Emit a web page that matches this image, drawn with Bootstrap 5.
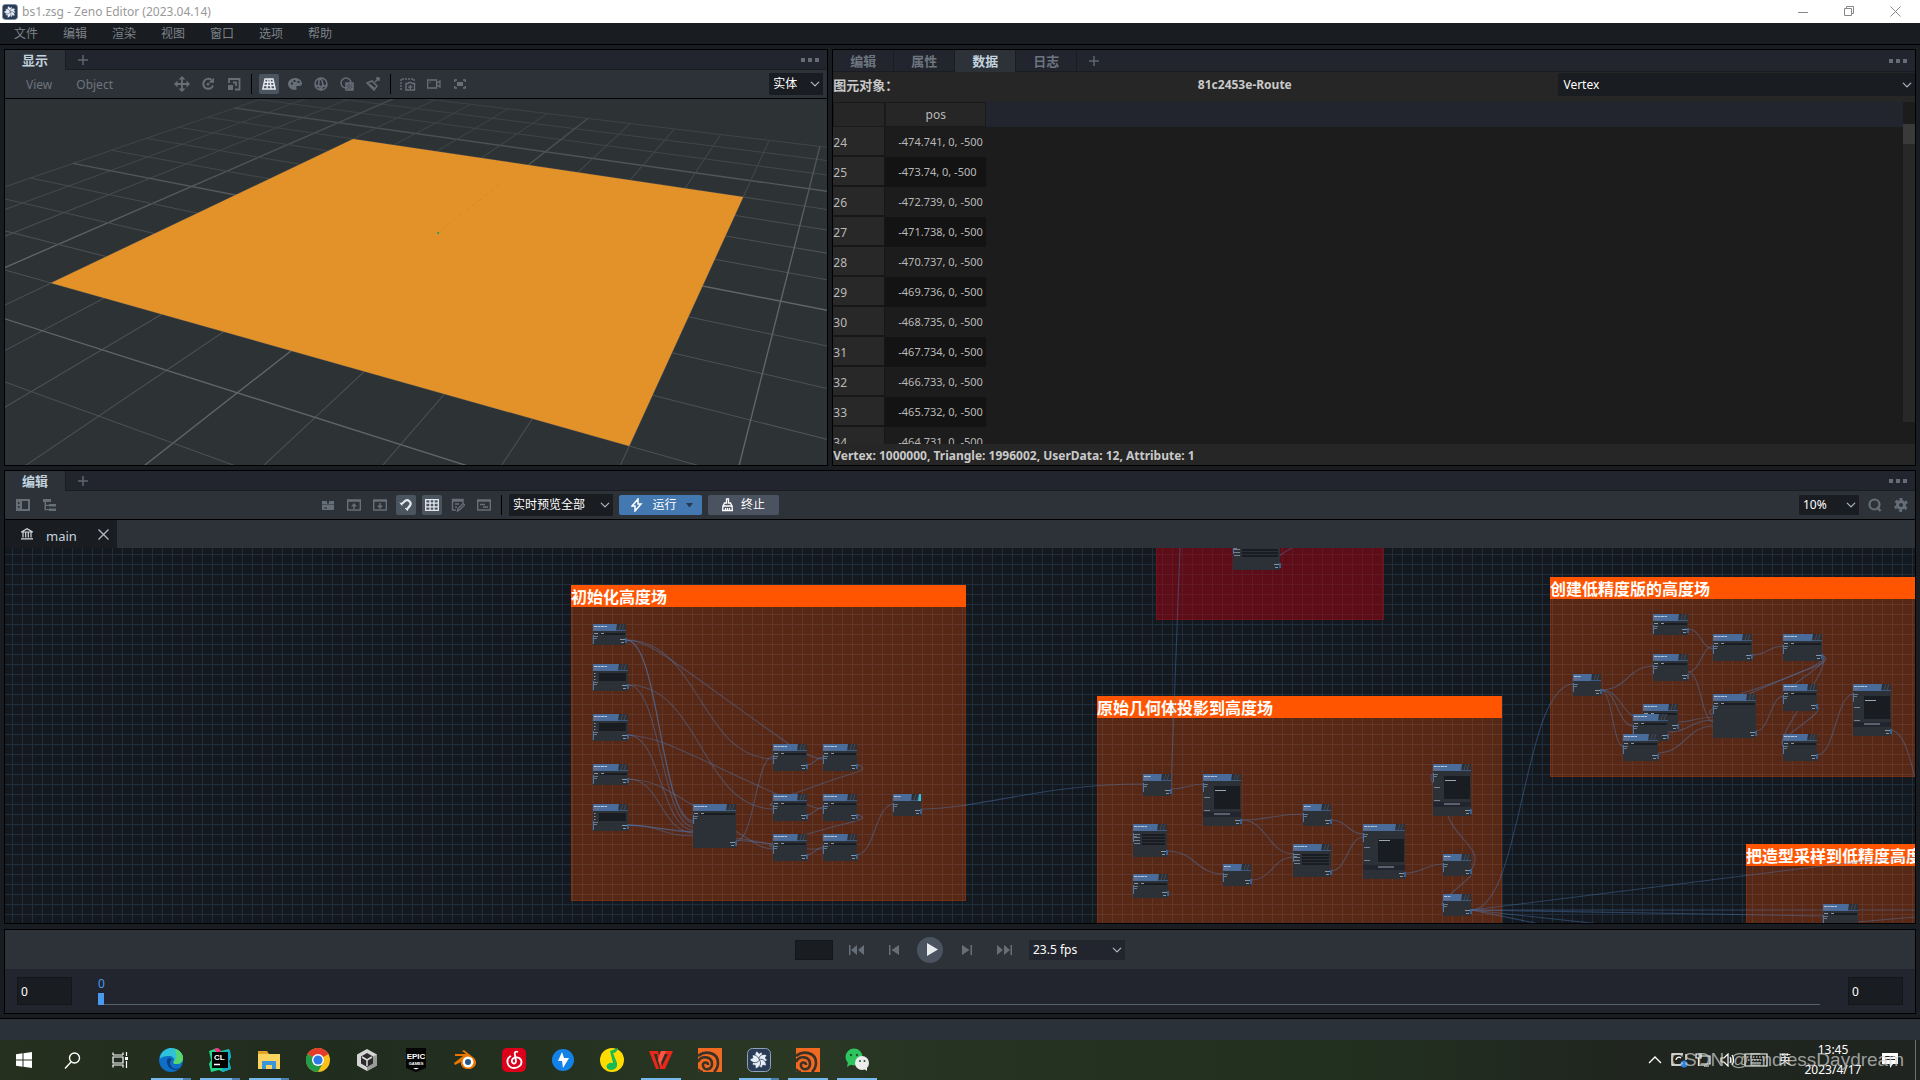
<!DOCTYPE html>
<html lang="zh-CN" data-bs-theme="dark">
<head>
<meta charset="utf-8">
<meta name="viewport" content="width=device-width, initial-scale=1">
<title>bs1.zsg - Zeno Editor (2023.04.14)</title>
<link rel="stylesheet" href="https://cdn.jsdelivr.net/npm/bootstrap@5.3.0/dist/css/bootstrap.min.css">
<style>
:root{--ui:"Noto Sans","Noto Sans CJK SC",sans-serif}
body{font:12px/16px var(--ui);background:#191c20;color:#8a9099;height:100vh;overflow:hidden}
button{font:inherit;color:inherit;background:none;border:0;padding:0}
svg{display:block}
.titlebar{height:23px;background:#fff;color:#999;padding:0 2px}
.win-btn{width:46px;height:23px;color:#888}
.menubar{height:22px;border-bottom:1px solid #000;padding:1px 0 0 2px;gap:1px}
.menubar button{padding:0 12px;color:#7d838b}
.workspace{padding:4px 4px 5px;gap:4px;min-height:0}
.dock{border:1px solid #000;background:#2d3239;min-width:0;min-height:0;overflow:hidden}
.dock-row{gap:4px;flex:417 1 0;min-height:0}
.dock-view{flex:824 1 0}
.dock-data{flex:1084 1 0;background:#262626}
.dock-graph{flex:452 1 0}
.tabs{background:#22252d;border-bottom:1px solid #191c20;height:20px;padding-right:8px;flex:none}
.tabs.tall{height:22px}
.tabs .tab{width:61px;font-size:13px;font-weight:700;color:#6d757f;border-right:1px solid #191c20;height:100%}
.tabs .tab.active{background:#2d3239;color:#c3d2df;height:calc(100% + 1px)}
.plus{width:34px;color:#5f666e}
.dots{color:#666d75}
.tools{background:#2d3239;flex:none;border-bottom:1px solid #000;height:29px}
.tool{width:20px;height:20px;border-radius:2px;color:#666e77;display:flex;align-items:center;justify-content:center}
.tool.active{background:#4b5560;color:#e6eaee}
.tool-set{gap:6px}
.divide{width:1px;height:20px;background:#000;margin:0 7px}
.menu-word{color:#6d747c;padding:2px 0 0 21px}
.menu-word + .menu-word{padding-left:24px}
.group-a{margin-left:59px}
.group-b{margin-left:259px}
.pick{--bs-form-select-bg-img:url("data:image/svg+xml,%3Csvg xmlns='http://www.w3.org/2000/svg' viewBox='0 0 10 10'%3E%3Cpath d='M1.500 3l3.500 4 3.500-4' fill='none' stroke='%23737b84' stroke-width='1.500'/%3E%3C/svg%3E");
 font:12px/16px var(--ui);padding:2px 18px 2px 4px;background-color:#191c20;color:#fff;border:0;border-radius:1px;background-position:right 3px center;background-size:10px 10px;min-height:0}
.shade-w{width:54px;height:22px}
.preview-w{width:104px;height:22px}
.zoom-w{width:60px;height:20px}
.fps-w{width:96px;height:20px;background-color:#22252d;margin-left:2px}
.object-row{height:30px;color:#c9c9c9;font-weight:700;padding-top:1px}
.object-row .pick{height:23px;padding-left:5px}
.object-row label,.object-row .objname{line-height:24px}
.object-row label{font-size:13px}
.sheet-wrap{background:#1c1c1c}
.sheet-scroll{overflow:hidden;min-height:0}
.sheet{width:153px;border-collapse:separate;border-spacing:0;color:#b9b9b9;font-size:11px}
.sheet th,.sheet td{height:30px;padding:0;font-weight:400;vertical-align:middle}
.sheet thead th{height:25px;background:#262626;border:1px solid #1a1a1a;text-align:center;font-size:12px}
.sheet tbody th{width:52px;background:#282828;border-bottom:2px solid #171717;border-right:1px solid #171717;font-size:12px;padding-top:3px}
.sheet td{padding-left:13px}
.sheet tbody tr:nth-child(even) td{background:#131313}
.headfill{background:#22252e;height:25px}
.vbar{width:12px;background:#1c1c1c}
.vbar .gap0{height:22px}
.vbar .thumb{height:20px;background:#3a3a3a}
.vbar .rest{background:#282828;margin-bottom:22px}
.stats{height:21px;color:#c9c9c9;font-weight:700;padding-top:4px}
.graph-tabs{height:28px;background:#2d3239;flex:none}
.graph-tab{width:112px;background:#191c20;color:#c3d2df;padding:0 8px 0 16px}
.graph-tab a{font-size:13px;margin-left:13px;padding-top:3px}
.act{height:20px;border-radius:2px;color:#fff;margin-left:6px}
.act-run{background:#4478b0;width:83px;padding:0 9px 0 12px}
.act-stop{background:#4b5260;width:71px}
.search-set{margin-left:6px}
.stage{min-height:0}
.stage svg{width:100%;height:100%}
.frame-title{font:700 16px "Noto Sans CJK SC",sans-serif;fill:#fff}
.timeline{margin:0 4px 4px;height:85px;flex:none;background:#22252d}
.play-row{height:39px;background:#2d3239}
.framebox{background:#191c20;border:1px solid #141619;color:#fff;font:12px/16px var(--ui);padding:0 3px;border-radius:0}
.framebox.sm{width:38px;height:20px}
.framebox.lg{width:55px;height:28px}
.ruler{margin:0 28px 0 26px;height:28px;border-bottom:1px solid #55626d;color:#4a9bf0}
.ruler .handle{width:6px;height:12px;background:#4a9bf0}
.ruler .num{height:16px;line-height:13px}
.jump{width:46px}
.step{width:29px}
.play-btn{width:26px;height:26px;border-radius:50%;background:#4b5260;color:#e8ebee;margin:0 9px}
.footer-bar{height:22px;border-top:1px solid #000;background:#2b3139;flex:none}
.taskbar{height:40px;flex:none;background:linear-gradient(90deg,#26301f,#202c1e 18%,#2a3824 42%,#263222 50%,#22301f 70%,#20261f 84%,#1f2420);color:#fff}
.sys{width:48px}
.apps{margin-left:2px}
.app{width:49px;height:40px}
.app svg{width:24px;height:24px}
.app.run{background:linear-gradient(#76b9ed,#76b9ed) center bottom/40px 2px no-repeat}
.app.many{background:linear-gradient(90deg,#76b9ed 80%,#4b7fae 80%) center bottom/40px 2px no-repeat}
.tray{width:24px;height:40px;display:flex;align-items:center;justify-content:center}
.tray.wide{width:34px}
.clock{line-height:20px;text-align:center;width:72px}
.desk-edge{width:5px;height:40px;border-left:1px solid #6d716c;margin-left:8px}
.mark-text{right:16px;bottom:7px;font:19px/26px "Liberation Sans",sans-serif;color:rgba(205,208,205,.72);white-space:nowrap;pointer-events:none}
</style>
<script src="https://cdn.jsdelivr.net/npm/bootstrap@5.3.0/dist/js/bootstrap.bundle.min.js"></script>
</head>
<body class="d-flex flex-column">

<svg width="0" height="0" class="position-absolute" aria-hidden="true"><defs>
<symbol id="i-plus" viewBox="0 0 10 10"><path d="M5 0v10M0 5h10" stroke="currentColor" stroke-width="1.500"/></symbol>
<symbol id="i-dots" viewBox="0 0 18 4"><path d="M0 0h4v4H0zM7 0h4v4H7zM14 0h4v4h-4z" fill="currentColor"/></symbol>
<symbol id="i-zeno" viewBox="0 0 24 24"><rect x=".5" y=".5" width="23" height="23" rx="5" fill="#2a3b55" stroke="#8fa1b8"/><g fill="#e6edf6" stroke="#2a3b55" stroke-width=".7"><path id="petal" d="M12 12.500C7 11 7 5 10 3l2 2.500L14.500 4c2 3 0 7-2.500 8.500z"/><use href="#petal" transform="rotate(72 12 12)"/><use href="#petal" transform="rotate(144 12 12)"/><use href="#petal" transform="rotate(216 12 12)"/><use href="#petal" transform="rotate(288 12 12)"/></g></symbol>
<symbol id="i-houdini" viewBox="0 0 24 24"><path fill="#f26a21" d="M0 0h24v24H0z"/><g fill="none" stroke="#3a3226" stroke-width="2.600"><path d="M0 8C7 2 20 4 20 15c0 4-2 7-4 9"/><path d="M0 14c3-7 14-6 14 2 0 6-8 7-9 2-1-4 5-5 5-1"/><path d="M0 21c1 2 3 3 5 3"/></g></symbol>
</defs></svg>

<header class="titlebar d-flex align-items-center">
  <svg width="16" height="16"><use href="#i-zeno"/></svg>
  <span class="ms-1">bs1.zsg - Zeno Editor (2023.04.14)</span>
  <div class="ms-auto d-flex">
    <button class="win-btn d-flex align-items-center justify-content-center" aria-label="Minimize"><svg width="10" height="10"><path d="M0 5.500h10" stroke="currentColor"/></svg></button>
    <button class="win-btn d-flex align-items-center justify-content-center" aria-label="Restore"><svg width="11" height="11" fill="none" stroke="currentColor"><path d="M.5 2.500h7v7h-7zM2.500 2.500v-2h7v7h-2"/></svg></button>
    <button class="win-btn d-flex align-items-center justify-content-center" aria-label="Close"><svg width="11" height="11" stroke="currentColor"><path d="M.5.5l10 10M10.500.5l-10 10"/></svg></button>
  </div>
</header>
<nav class="menubar d-flex align-items-center">
  <button>文件</button><button>编辑</button><button>渲染</button><button>视图</button><button>窗口</button><button>选项</button><button>帮助</button>
</nav>

<main class="workspace d-flex flex-column flex-grow-1">
  <div class="dock-row d-flex">
    <section class="dock dock-view d-flex flex-column">
      <div class="tabs d-flex align-items-center">
        <button class="tab active">显示</button>
        <button class="plus d-flex justify-content-center" aria-label="Add tab"><svg width="10" height="10"><use href="#i-plus"/></svg></button>
        <button class="dots ms-auto" aria-label="More"><svg width="18" height="4"><use href="#i-dots"/></svg></button>
      </div>
      <div class="tools d-flex align-items-center pe-1">
        <button class="menu-word">View</button><button class="menu-word">Object</button>
        <div class="tool-set group-a d-flex">
          <button class="tool" aria-label="Move"><svg width="16" height="16" fill="none" stroke="currentColor" stroke-width="1.800"><path d="M8 2v12M2 8h12"/><path d="M8 0l3.500 3.500h-7zM8 16l3.500-3.500h-7zM0 8l3.500-3.500v7zM16 8l-3.500-3.500v7z" fill="currentColor" stroke="none"/></svg></button>
          <button class="tool" aria-label="Rotate"><svg width="14" height="14" fill="none" stroke="currentColor" stroke-width="2"><path d="M10.500 3A5 5 0 1 0 12 8.500"/><path d="M7.500 5.800H13V.8z" fill="currentColor" stroke="none"/><circle cx="7" cy="7.300" r="1.300" fill="currentColor" stroke="none"/></svg></button>
          <button class="tool" aria-label="Scale"><svg width="14" height="14" fill="none" stroke="currentColor" stroke-width="1.800"><path d="M2 6V2h10.500v10.500H8"/><path d="M1 8h5v5H1z" fill="currentColor" stroke="none"/><path d="M6 5.500h3V9"/></svg></button>
        </div>
        <span class="divide"></span>
        <div class="tool-set d-flex">
          <button class="tool active" aria-label="Grid"><svg width="14" height="12" fill="none" stroke="currentColor" stroke-width="1.400"><path d="M3 1h8l2.200 10H.8zM6 1L5 11M8 1l1 10M2.500 4.200h9M1.500 7.500h11"/></svg></button>
          <button class="tool" aria-label="Palette"><svg width="14" height="14"><path fill="currentColor" fill-rule="evenodd" d="M7 1c4 0 7 2.500 7 5.500C14 9 12 9 10 9s-2 1-1.500 2S8 13 7 13C3 13 0 10 0 7s3-6 7-6zM3 5.500h2v2H3zM5.500 3h2v2h-2zM9.500 4h2v2h-2z"/></svg></button>
          <button class="tool" aria-label="Wireframe"><svg width="14" height="14" fill="none" stroke="currentColor" stroke-width="1.600"><circle cx="7" cy="7" r="6"/><path d="M6 1c-2 4-2 8 1 12M6 1c3 3 4 7 1 12M1 8c4 2 8 2 12 0"/></svg></button>
          <button class="tool" aria-label="Smooth"><svg width="14" height="14" fill="none" stroke="currentColor" stroke-width="1.500"><path d="M6 11a5 5 0 1 1 5-5"/><path d="M6 6h7v7H6zM7 7l6 6M9.500 6.500l3.500 3.500M6.500 9.500L10 13"/></svg></button>
          <button class="tool" aria-label="Light"><svg width="14" height="14" fill="none" stroke="currentColor" stroke-width="1.500"><path d="M1 6l5-2 5 5-3 4zM3 7l5 4M9 5l4-4M10 1h3v3M6 4l2 2"/></svg></button>
        </div>
        <span class="divide"></span>
        <div class="tool-set d-flex">
          <button class="tool" aria-label="Snapshot"><svg width="16" height="13" fill="none" stroke="currentColor" stroke-width="1.400"><path d="M1 12V1h13v2" stroke-dasharray="2 1"/><path d="M6 5.500h2l1-1h2l1 1h2.500v6.500H6zM10.300 7v4M8.300 9h4"/></svg></button>
          <button class="tool" aria-label="Record"><svg width="14" height="10" fill="none" stroke="currentColor" stroke-width="1.300"><path d="M.6 1h9v8h-9zM10 4l3-2v6l-3-2M2.500 3.500h1"/></svg></button>
          <button class="tool" aria-label="Focus"><svg width="12" height="10" fill="none" stroke="currentColor" stroke-width="1.400"><path d="M.7 3V1H3M9 1h2.300v2M11.300 7v2H9M3 9H.7V7"/><path d="M3 3h6v4H3z" fill="currentColor" stroke="none"/></svg></button>
        </div>
        <select class="form-select pick shade-w ms-auto" aria-label="着色"><option>实体</option></select>
      </div>
      <div class="stage flex-grow-1"><svg id="scene" viewBox="5 99 822 366" preserveAspectRatio="xMidYMid slice"></svg></div>
    </section>

    <section class="dock dock-data d-flex flex-column">
      <div class="tabs tall d-flex align-items-center">
        <button class="tab">编辑</button><button class="tab">属性</button><button class="tab active">数据</button><button class="tab">日志</button>
        <button class="plus d-flex justify-content-center" aria-label="Add tab"><svg width="10" height="10"><use href="#i-plus"/></svg></button>
        <button class="dots ms-auto" aria-label="More"><svg width="18" height="4"><use href="#i-dots"/></svg></button>
      </div>
      <div class="object-row row g-0 flex-shrink-0">
        <label class="col-4" for="prim">图元对象：</label>
        <span class="col-4 objname ps-1">81c2453e-Route</span>
        <div class="col-4 ps-1"><select id="prim" class="form-select pick"><option>Vertex</option></select></div>
      </div>
      <div class="sheet-wrap d-flex flex-grow-1 sheet-scroll">
        <div class="sheet-scroll">
          <table class="sheet">
            <thead><tr><th></th><th>pos</th></tr></thead>
            <tbody>
              <tr><th>24</th><td>-474.741, 0, -500</td></tr>
              <tr><th>25</th><td>-473.74, 0, -500</td></tr>
              <tr><th>26</th><td>-472.739, 0, -500</td></tr>
              <tr><th>27</th><td>-471.738, 0, -500</td></tr>
              <tr><th>28</th><td>-470.737, 0, -500</td></tr>
              <tr><th>29</th><td>-469.736, 0, -500</td></tr>
              <tr><th>30</th><td>-468.735, 0, -500</td></tr>
              <tr><th>31</th><td>-467.734, 0, -500</td></tr>
              <tr><th>32</th><td>-466.733, 0, -500</td></tr>
              <tr><th>33</th><td>-465.732, 0, -500</td></tr>
              <tr><th>34</th><td>-464.731, 0, -500</td></tr>
            </tbody>
          </table>
        </div>
        <div class="headfill flex-grow-1"></div>
        <div class="vbar d-flex flex-column"><div class="gap0"></div><div class="thumb"></div><div class="rest flex-grow-1"></div></div>
      </div>
      <div class="stats flex-shrink-0">Vertex: 1000000, Triangle: 1996002, UserData: 12, Attribute: 1</div>
    </section>
  </div>

  <section class="dock dock-graph d-flex flex-column">
    <div class="tabs d-flex align-items-center">
      <button class="tab active">编辑</button>
      <button class="plus d-flex justify-content-center" aria-label="Add tab"><svg width="10" height="10"><use href="#i-plus"/></svg></button>
      <button class="dots ms-auto" aria-label="More"><svg width="18" height="4"><use href="#i-dots"/></svg></button>
    </div>
    <div class="tools d-flex align-items-center ps-2 pe-1">
      <div class="tool-set d-flex">
        <button class="tool" aria-label="Side panel"><svg width="14" height="12"><path fill="currentColor" fill-rule="evenodd" d="M0 0h14v12H0zM6 2v8h6V2zM2 3h1.500v2H2zM2 7h1.500v2H2z"/></svg></button>
        <button class="tool" aria-label="Tree"><svg width="13" height="12" fill="currentColor"><path d="M0 0h8v3H0zM6 5h7v2.500H6zM6 9.500h7V12H6zM1.500 3H3v7h3v1.200H1.500zM3 5.700h3V7H3z"/></svg></button>
      </div>
      <div class="tool-set group-b d-flex">
        <button class="tool" aria-label="Subnet"><svg width="12" height="11" fill="currentColor"><path d="M0 1h5v2.500h2V1h5v3.500H0zM0 5h12v5H0z"/><path d="M2 8h3" stroke="#2d3239"/></svg></button>
        <button class="tool" aria-label="Import"><svg width="14" height="12" fill="none" stroke="currentColor" stroke-width="1.400"><path d="M.7 1h12.600v10H.7zM.7 2h12.600M7 10V7"/><path d="M7 4l3 3.500H4z" fill="currentColor" stroke="none"/></svg></button>
        <button class="tool" aria-label="Export"><svg width="14" height="12" fill="none" stroke="currentColor" stroke-width="1.400"><path d="M.7 1h12.600v10H.7zM.7 2h12.600M7 4v3"/><path d="M7 10L4 6.500h6z" fill="currentColor" stroke="none"/></svg></button>
        <button class="tool active" aria-label="Snap"><svg width="14" height="14" fill="none" stroke="currentColor" stroke-width="2.200"><path d="M2 6.500l4-3.500c3-2.500 7 1.500 5 4.500L7.500 12"/><path d="M1 4.500l2 3M6 10l3 2.500" stroke-width="1"/></svg></button>
        <button class="tool active" aria-label="Grid"><svg width="14" height="12" fill="none" stroke="currentColor" stroke-width="1.300"><path d="M.7.7h12.600v10.600H.7zM5 .7v10.600M9 .7v10.600M.7 4.200h12.600M.7 7.800h12.600"/></svg></button>
        <button class="tool" aria-label="Edit note"><svg width="14" height="14" fill="none" stroke="currentColor" stroke-width="1.400"><path d="M12 5V1.500H1.500V12H5M1 3h11M4 6h4M4 9h2"/><path d="M6.500 13l.5-2.500L12 5.500l1.500 1.500-5 5z"/></svg></button>
        <button class="tool" aria-label="Console"><svg width="14" height="12" fill="none" stroke="currentColor" stroke-width="1.400"><path d="M.7 1h12.600v10H.7zM.7 2h12.600M3 5.500h5M6 8h5"/></svg></button>
      </div>
      <span class="divide"></span>
      <select class="form-select pick preview-w" aria-label="预览"><option>实时预览全部</option></select>
      <button class="act act-run d-flex align-items-center justify-content-between"><svg width="12" height="14" fill="none" stroke="currentColor" stroke-width="1.500"><path d="M7 1L1 8h3l0 5 6-7H7z"/></svg>运行<svg width="7" height="5"><path d="M0 0h7L3.500 4.500z" fill="#243850"/></svg></button>
      <button class="act act-stop d-flex align-items-center justify-content-center gap-2"><svg width="11" height="14" fill="none" stroke="currentColor" stroke-width="1.300"><path d="M4.500 1h2v4h2L10 8H1l1.500-3h2zM1 8l-.4 4.500h9.800L10 8M3.500 12v-2M5.500 12v-2M7.500 12v-2"/></svg>终止</button>
      <select class="form-select pick zoom-w ms-auto" aria-label="缩放"><option>10%</option></select>
      <div class="tool-set search-set d-flex">
        <button class="tool" aria-label="Search"><svg width="14" height="14" fill="none" stroke="currentColor" stroke-width="2.200"><circle cx="6.500" cy="6.500" r="5"/><path d="M9 9l3.500 4"/></svg></button>
        <button class="tool" aria-label="Settings"><svg width="14" height="14"><g fill="none" stroke="currentColor"><circle cx="7" cy="7" r="3.500" stroke-width="3"/><circle cx="7" cy="7" r="5.800" stroke-width="2.200" stroke-dasharray="3 3.073" transform="rotate(-105 7 7)"/></g></svg></button>
      </div>
    </div>
    <div class="graph-tabs d-flex">
      <div class="graph-tab d-flex align-items-center">
        <svg width="12" height="12" fill="none" stroke="#d5dade" stroke-width="1.200"><path d="M.5 4L6 .8 11.500 4zM2 4.500v5M4.700 4.500v5M7.300 4.500v5M10 4.500v5M0 10.800h12"/></svg>
        <a href="#main" class="text-reset text-decoration-none">main</a>
        <button class="ms-auto" aria-label="Close tab"><svg width="11" height="11" stroke="#b5bac0" stroke-width="1.300"><path d="M.5.5l10 10M10.500.5l-10 10"/></svg></button>
      </div>
    </div>
    <div class="stage flex-grow-1"><svg id="graph"></svg></div>
  </section>
</main>

<section class="timeline dock">
  <div class="play-row d-flex align-items-center justify-content-center">
    <input class="framebox sm" aria-label="Frame" value="">
    <button class="tool jump" aria-label="First"><svg width="15" height="10" fill="currentColor"><path d="M0 0h1.500v10H0zM8 0v10L2 5zM15 0v10L9 5z"/></svg></button>
    <button class="tool step" aria-label="Previous"><svg width="10" height="10" fill="currentColor"><path d="M0 0h1.500v10H0zM10 0v10L2.500 5z"/></svg></button>
    <button class="play-btn d-flex align-items-center justify-content-center" aria-label="Play"><svg class="ms-1" width="11" height="13" fill="currentColor"><path d="M0 0l11 6.500L0 13z"/></svg></button>
    <button class="tool step" aria-label="Next"><svg width="10" height="10" fill="currentColor"><path d="M8.500 0H10v10H8.500zM0 0v10l7.500-5z"/></svg></button>
    <button class="tool jump" aria-label="Last"><svg width="15" height="10" fill="currentColor"><path d="M13.500 0H15v10h-1.500zM7 0v10l6-5zM0 0v10l6-5z"/></svg></button>
    <select class="form-select pick fps-w" aria-label="fps"><option>23.5 fps</option></select>
  </div>
  <div class="d-flex align-items-center justify-content-between px-2 pt-2">
    <input class="framebox lg ms-1" aria-label="Start" value="0">
    <div class="ruler flex-grow-1"><div class="num">0</div><div class="handle"></div></div>
    <input class="framebox lg me-1" aria-label="End" value="0">
  </div>
</section>
<div class="footer-bar"></div>

<footer class="taskbar d-flex align-items-center position-relative">
  <button class="sys d-flex justify-content-center" aria-label="Start"><svg width="16" height="16" fill="#fff"><path d="M0 2.200L6.500 1.300v6.200H0zM7.500 1.200L16 0v7.500H7.500zM0 8.500h6.500v6.200L0 13.800zM7.500 8.500H16V16l-8.500-1.200z"/></svg></button>
  <button class="sys d-flex justify-content-center" aria-label="Search"><svg width="17" height="17" fill="none" stroke="#fff" stroke-width="1.400"><circle cx="10.500" cy="6" r="5"/><path d="M7 10l-6 6.500"/></svg></button>
  <button class="sys d-flex justify-content-center" aria-label="Task view"><svg width="17" height="16" fill="none" stroke="#fff" stroke-width="1.200"><path d="M1 5h10v6H1zM1 3V.5M11 3V.5M1 3h10M1 15.500V13h10v2.500M14.500 0v4M14.500 9v7"/><path d="M13 5h3v3h-3z" fill="#fff" stroke="none"/></svg></button>
  <div class="apps d-flex">
  <button class="app many d-flex align-items-center justify-content-center" aria-label="Edge"><svg viewBox="0 0 24 24"><circle cx="12" cy="12" r="12" fill="#0d6fc5"/><path d="M1 9C3 2 9 0 12 0c8 0 12 6 12 10 0 5-4 6-7 6-3 0-3-2-2-3 1-3-2-5-5-5-4 0-8 1-9 3z" fill="#2fc2d8"/><path d="M15 1c6 1 9 5 9 9 0 5-4 6-7 6-3 0-3-2-2-3 4-2 3-8 0-12z" fill="#58d66b"/><path d="M8 12c-1 6 4 10 9 10 2 0 3-1 4-2-4 2-10 0-10-5 0-2 1-3 2-4-2-1-4-1-5 1z" fill="#0a3f86"/></svg></button>
  <button class="app many d-flex align-items-center justify-content-center" aria-label="CLion"><svg viewBox="0 0 24 24"><path d="M1 3l8-3 4 3 8-2 2 8-2 4 2 8-8 3-4-2-8 2-2-8 2-4z" fill="#21d789"/><path d="M15 3l7-1 1 7-2 4 2 8-9 3z" fill="#14a9c8"/><path d="M6 1l4 5 3-3-3-3z" fill="#fc2f8c"/><path d="M4 4h16v16H4z"/><text x="6" y="12" font-size="8" font-weight="700" fill="#fff" font-family="Liberation Sans,sans-serif">CL</text><path d="M6 16.500h6" stroke="#fff" stroke-width="1.500"/></svg></button>
  <button class="app many d-flex align-items-center justify-content-center" aria-label="Explorer"><svg viewBox="0 0 24 24"><path d="M1 3h9l2 3h11v15H1z" fill="#e2a52a"/><path d="M1 6h22v15H1z" fill="#fbd35f"/><path d="M5 13h14v8h-4v-4H9v4H5z" fill="#3c94d9"/></svg></button>
  <button class="app d-flex align-items-center justify-content-center" aria-label="Chrome"><svg viewBox="0 0 24 24"><circle cx="12" cy="12" r="12" fill="#fbc116"/><path d="M12 12L1.600 6A12 12 0 0 1 22.400 6z" fill="#e33b2e"/><path d="M12 12L1.600 6A12 12 0 0 0 12 24l5-9z" fill="#229a48"/><circle cx="12" cy="12" r="6" fill="#fff"/><circle cx="12" cy="12" r="4.600" fill="#2c7be5"/></svg></button>
  <button class="app d-flex align-items-center justify-content-center" aria-label="Unity Hub"><svg viewBox="0 0 24 24"><path d="M12 1l10 5.500v11L12 23 2 17.500v-11z" fill="#d5d5d5"/><path d="M12 12l10-5.500v11L12 23z" fill="#9a9a9a"/><path d="M12 5l6 3.500v7L12 19l-6-3.500v-7z" fill="#2b2b2b"/><path d="M12 12v6M12 12L7 9M12 12l5-3" stroke="#ddd" stroke-width="1.500"/></svg></button>
  <button class="app d-flex align-items-center justify-content-center" aria-label="Epic Games"><svg viewBox="0 0 24 24"><path d="M2 0h20v20l-10 4-10-4z" fill="#050505"/><text x="12" y="11" text-anchor="middle" font-size="8" font-weight="700" fill="#fff" font-family="Liberation Sans,sans-serif">EPIC</text><text x="12" y="17" text-anchor="middle" font-size="4" font-weight="700" fill="#fff" font-family="Liberation Sans,sans-serif">GAMES</text><path d="M9 20h6l-3 1.500z" fill="#fff"/></svg></button>
  <button class="app d-flex align-items-center justify-content-center" aria-label="Blender"><svg viewBox="0 0 24 24"><path d="M9 3l2-1 10 8c5 5 0 12-6 11-5 0-8-4-7-7l-6 3-1-2 9-7H2V6h11z" fill="#ea7600"/><circle cx="15" cy="14" r="5.500" fill="#fff"/><circle cx="15" cy="14" r="3" fill="#265787"/></svg></button>
  <button class="app d-flex align-items-center justify-content-center" aria-label="NetEase Music"><svg viewBox="0 0 24 24"><rect width="24" height="24" rx="5" fill="#dd001b"/><path d="M16 4c-2-1-4 0-3 3l1 6c0 4-5 3-4-1 1-3 7-4 9 0 2 5-3 8-7 8-7 0-9-9-3-12" fill="none" stroke="#fff" stroke-width="1.900"/></svg></button>
  <button class="app d-flex align-items-center justify-content-center" aria-label="Thunder"><svg viewBox="0 0 24 24"><circle cx="12" cy="12" r="11" fill="#1382e8"/><path d="M11 4l-4 9h4l1 7 6-10h-5z" fill="#fff"/></svg></button>
  <button class="app d-flex align-items-center justify-content-center" aria-label="QQ Music"><svg viewBox="0 0 24 24"><circle cx="12" cy="12" r="12" fill="#ffdc00"/><path d="M10 3l8-3c-1 4-3 5-5 5l4 10c1 5-3 7-6 7-4 0-6-4-3-6 2-2 4-1 5-1z" fill="#19b955"/></svg></button>
  <button class="app run d-flex align-items-center justify-content-center" aria-label="WPS"><svg viewBox="0 0 24 24"><path d="M0 3h9l1 4 2-4h12l-8 18h-5L8 6H5l5 15H7z" fill="#e9281c"/><path d="M15 6l-3 7 1 5 6-12z" fill="#2a2f23"/><path d="M12 3h5l-6 14-2-5z" fill="#ff5343"/></svg></button>
  <button class="app d-flex align-items-center justify-content-center" aria-label="Houdini"><svg><use href="#i-houdini"/></svg></button>
  <button class="app many d-flex align-items-center justify-content-center" aria-label="Zeno"><svg><use href="#i-zeno"/></svg></button>
  <button class="app run d-flex align-items-center justify-content-center" aria-label="Houdini Apprentice"><svg><use href="#i-houdini"/></svg></button>
  <button class="app run d-flex align-items-center justify-content-center" aria-label="WeChat"><svg viewBox="0 0 24 24"><circle cx="9" cy="9" r="8.500" fill="#2dc65e"/><path d="M3 14l-1 5 5-3z" fill="#2dc65e"/><circle cx="17" cy="15" r="7" fill="#ececec"/><path d="M18 20l4 3 0-5z" fill="#ececec"/><g fill="#23522f"><circle cx="6" cy="7" r="1.200"/><circle cx="12" cy="7" r="1.200"/><circle cx="15" cy="13" r="1"/><circle cx="19.500" cy="13" r="1"/></g></svg></button>
  </div>

  <div class="ms-auto d-flex align-items-center">
    <button class="tray" aria-label="Hidden icons"><svg width="14" height="8" fill="none" stroke="#fff" stroke-width="1.400"><path d="M1 7l6-6 6 6"/></svg></button>
    <button class="tray" aria-label="Sync"><svg width="17" height="16" fill="none" stroke="#fff" stroke-width="1.300"><path d="M12 2H1v11h9M15 2v6M5 8a3 3 0 0 1 5-2"/><circle cx="13" cy="12" r="3.500" fill="#2f7fd6" stroke="none"/></svg></button>
    <button class="tray" aria-label="Network"><svg width="16" height="14" fill="none" stroke="#fff" stroke-width="1.200"><path d="M4 3h11v8H6M1 1h5v4H1zM3.500 5v8M9 13h5"/></svg></button>
    <button class="tray" aria-label="Volume"><svg width="14" height="14" fill="none" stroke="#fff" stroke-width="1.200"><path d="M1 5h3l4-4v12L4 9H1zM10 4c1 2 1 4 0 6M12 2c2 3 2 7 0 10"/></svg></button>
    <button class="tray wide" aria-label="Keyboard"><svg width="24" height="14" fill="none" stroke="#fff" stroke-width="1.200"><path d="M1 1h22v12H1zM7 10h10"/><path d="M3 4h18M4 7h17" stroke-dasharray="1.500 1.500"/></svg></button>
    <button class="tray">英</button>
    <div class="clock">13:45<br>2023/4/17</div>
    <button class="tray wide ms-1" aria-label="Notifications"><svg width="16" height="15" fill="#fff"><path d="M0 0h16v11h-5l-3 4v-4H0z"/><path d="M3 3.500h10M3 6.500h10" stroke="#222"/></svg></button>
    <span class="desk-edge"></span>
  </div>
  <div class="mark-text position-absolute">CSDN @EndlessDaydream</div>
</footer>

<script>
// 3D viewport: unit square of the ground plane projected to the screen
const project = (u, v) => {
  const w = 1 - 0.1849 * u - 0.3617 * v;
  return [(252.6 * u - 320.4 * v + 353) / w, (21.6 * u + 41.6 * v + 139) / w].map(n => n.toFixed(1)).join(' ');
};
let scene = '<defs><linearGradient id="fog" gradientUnits="userSpaceOnUse" x1="0" y1="99" x2="0" y2="260"><stop offset="0" stop-color="#2d3235" stop-opacity=".55"/><stop offset="1" stop-color="#2d3235" stop-opacity="0"/></linearGradient></defs><rect x="-600" y="-100" width="3000" height="1200" fill="#2d3235"/>';
for (let i = -8; i <= 8; i++) {
  const t = 0.5 + i / 8, major = i % 5 === 0;
  scene += `<path d="M${project(t, -0.5)}L${project(t, 1.5)}M${project(-0.5, t)}L${project(1.5, t)}" stroke="${major ? '#626567' : '#4e5254'}" stroke-width="${major ? 1.4 : 1}" fill="none"/>`;
}
scene += '<rect x="-600" y="99" width="3000" height="170" fill="url(#fog)"/><path d="M353 139L743 197L629 446L51 283Z" fill="#e39129"/><path d="M440 231L505 180" stroke="#c98a3a" stroke-width=".8" stroke-dasharray="5 3"/><path d="M437 233h2" stroke="#3f9a50" stroke-width="2"/>';
document.getElementById('scene').innerHTML = scene;

// Node graph
const frames = [
  [571, 585, 395, 316, '初始化高度场'], [1097, 696, 405, 260, '原始几何体投影到高度场'],
  [1550, 577, 400, 200, '创建低精度版的高度场'], [1746, 844, 400, 200, '把造型采样到低精度高度场']];
const wires = [
  [626,640,694,821],[626,640,694,823],[626,640,774,759],[628,685,694,827],[628,685,774,809],
  [628,735,694,830],[628,779,694,833],[628,825,694,832],[628,825,694,836],
  [736,841,774,756],[806,765,824,757],[806,815,824,807],[806,855,824,847],[856,855,894,804],
  [1171,789,1204,784],[1241,820,1304,814],[1241,820,1294,854],[1167,851,1224,874],[1251,880,1294,857],
  [1331,820,1364,834],[1331,871,1364,837],[1405,873,1444,864],[1471,910,1574,684],
  [1601,690,1654,666],[1601,690,1643,719],[1601,690,1634,726],[1601,690,1624,747],
  [1688,629,1714,649],[1688,672,1714,646],[1688,672,1714,722],[1677,722,1714,717],[1667,732,1714,720],[1657,753,1714,726],
  [1752,655,1784,646],[1756,731,1784,696],[1817,755,1854,694]];
// wires drawn nearly straight and wires that run back to the left
const loops = ['M626 640C650 640 670 660 790 745C805 754 815 759 824 759','M628 735C660 737 680 750 774 793L810 806Q818 809 824 809',
  'M628 779C650 780 660 785 694 806L760 846Q766 849 774 849','M628 825L694 832M736 838L800 849H824','M736 840L774 844',
  'M921 809C980 809 1040 784 1144 784',
  'M1171 789C1174 720 1177 640 1180 548','M857 765C870 768 860 772 838 778L790 795C770 803 766 806 774 806',
  'M857 815C870 818 860 820 840 825L800 836C770 844 764 847 774 847','M1471 870C1486 850 1456 840 1448 816L1437 790C1430 780 1429 775 1434 774',
  'M1471 876L1446 898C1440 904 1442 906 1444 906','M1822 655C1832 660 1822 665 1800 672L1730 702C1706 710 1706 714 1714 714',
  'M1822 655C1832 660 1800 675 1740 694M1822 655C1835 662 1785 685 1784 697M1822 655C1836 665 1770 740 1784 747',
  'M1817 706C1826 712 1790 730 1782 742L1784 747','M1891 730C1905 732 1910 760 1915 777','M1471 910L1520 904L1830 865L1915 857',
  'M1471 910H1915','M1471 910L1824 916','M1471 910L1540 924M1471 910L1600 924','M1857 922L1915 917M1265 568Q1278 555 1292 548'];
// x, y, width, height, kind
const nodes = [
  [593,624,33,21,'f'],[593,664,35,27,'b'],[593,714,35,27,'b'],[593,764,35,21,'f'],[593,804,35,27,'b'],[693,804,43,44,'f'],
  [773,744,34,27,'f'],[823,744,34,27,'f'],[773,794,34,27,'f'],[823,794,34,27,'f'],[773,834,34,27,'f'],[823,834,34,27,'f'],[893,794,28,22,'v'],
  [1143,774,28,22,'p'],[1203,774,38,52,'c'],[1133,824,34,33,'m'],[1133,874,35,24,'f'],[1223,864,28,22,'p'],[1303,804,28,22,'p'],
  [1293,844,38,33,'m'],[1363,824,42,55,'c'],[1433,764,38,52,'c'],[1443,854,28,22,'p'],[1443,894,28,22,'p'],
  [1653,614,35,21,'f'],[1653,654,35,27,'f'],[1573,674,28,22,'p'],[1643,704,35,27,'f'],[1633,714,35,27,'f'],[1623,734,35,27,'f'],
  [1713,634,39,27,'f'],[1783,634,39,27,'f'],[1713,694,43,44,'f'],[1783,684,34,27,'f'],[1783,734,34,27,'f'],[1853,684,38,52,'c'],
  [1823,904,35,27,'f'],[1233,536,47,34,'m']];
const box = (x, y, w, h, c) => `<rect x="${x}" y="${y}" width="${w}" height="${h}" fill="${c}"/>`;
const drawNode = ([x, y, w, h, k]) => {
  let s = box(x, y, w, h, '#2c3138') + box(x, y + 6, w, 1, '#3d5a80');
  s += `<path d="M${x} ${y}h${w - 9}l-1 7H${x}z" fill="#4a6c9b"/><path d="M${x + w - 7} ${y + 6}l2-6M${x + w - 4} ${y + 6}l2-6" stroke="#434957"/>`;
  s += `<path d="M${x + 1} ${y + 2.5}h${w > 30 ? 13 : 7}" stroke="#b4c4dc" stroke-dasharray="3 .5"/><path d="M${x + 1} ${y + 5}h5" stroke="#8b6d70" stroke-width=".8"/>`;
  s += box(x + w - 1, y + h - 7, 2, 5, '#35608f') + `<path d="M${x + w - 6} ${y + h - 5.5}h5M${x + w - 5} ${y + h - 2.5}h3" stroke="#8795a5"/>`;
  const low = k === 'b' ? 18 : k === 'f' ? 12 : 10;
  s += box(x, y + low - 1, 1, Math.min(9, h - low), '#4478b0') + `<path d="M${x + 1} ${y + low + .5}h4M${x + 1} ${y + low + 2.5}h3" stroke="#76828f" stroke-width=".9"/>`;
  if (k === 'f') s += box(x + 7, y + 9, w - 8, 2, '#191c20') + `<path d="M${x + 1} ${y + 9.5}h4M${x + 8} ${y + 9.5}h3" stroke="#8f98a2"/>`;
  if (k === 'b') s += box(x + 6, y + 9, w - 8, 8, '#191c20') + `<path d="M${x + 1} ${y + 9.5}h1.500M${x + 1} ${y + 12.5}h1.500M${x + 1} ${y + 15.5}h1.500" stroke="#8f98a2"/>`;
  if (k === 'm') for (let i = 0; i < 4; i++) s += box(x + 9, y + 10 + i * 3, w - 11, 2, '#191c20') + `<path d="M${x + 1} ${y + 10.5 + i * 3}h6" stroke="#76828f"/>`;
  if (k === 'c') s += box(x + w - 27, y + (h > 52 ? 15 : 12), 26, 23, '#191c20') + box(x, y + h - 14, w, 5, '#22252d') + box(x + w - 27, y + h - 13, 16, 2, '#5b606c') + `<path d="M${x + w - 26} ${y + 16.5}h11" stroke="#9da5ad"/><path d="M${x + 1} ${y + 23.5}h6M${x + 1} ${y + 36.5}h6" stroke="#76828f"/>`;
  if (k === 'v') s += `<path d="M${x + w - 3} ${y + 7}l1-7h2v7z" fill="#2fc5e0"/>`;
  return s;
};
let g = '<defs><pattern id="mesh" x="2" y="4" width="10" height="10" patternUnits="userSpaceOnUse"><path d="M0 .5h10M.5 0v10" stroke="#1f2e3a"/></pattern></defs><g transform="translate(-5 -548)">'
  + box(0, 540, 4000, 1200, '#14181f') + '<rect x="0" y="540" width="4000" height="1200" fill="url(#mesh)"/>'
  + '<rect x="1156" y="540" width="228" height="80" fill="#b3000f" fill-opacity=".45"/>'
  + '<path d="M1156.500 540v79.500h227V540" fill="none" stroke="#701018"/>';
for (const [x, y, w, h] of frames)
  g += `<rect x="${x + .5}" y="${y + .5}" width="${w - 1}" height="${h - 1}" fill="#ff5000" fill-opacity=".29" stroke="#c04008" stroke-opacity=".45"/>` + box(x, y, w, 22, '#ff5500');
for (const [x, y, , , t] of frames) g += `<text class="frame-title" x="${x}" y="${y + 18}">${t}</text>`;
g += '<g fill="none" stroke="#4d7db8" stroke-opacity=".42" stroke-width="1.100">';
for (const [a, b, c, d] of wires) { const m = (c - a) / 2; g += `<path d="M${a} ${b}C${a + m} ${b} ${c - m} ${d} ${c} ${d}"/>`; }
for (const p of loops) g += `<path d="${p}"/>`;
g += '</g>' + nodes.map(drawNode).join('') + '</g>';
document.getElementById('graph').innerHTML = g;
</script>
</body>
</html>
